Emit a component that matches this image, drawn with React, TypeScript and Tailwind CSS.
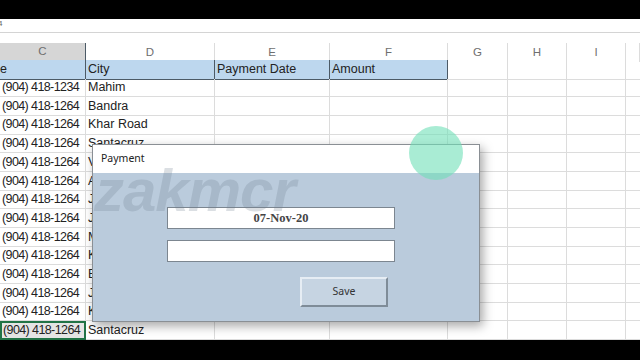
const COLS = ["C", "D", "E", "F", "G", "H", "I", ""]

const ROWS = [
  { phone: "e", city: "City", e: "Payment Date", f: "Amount" },
  { phone: "(904) 418-1234", city: "Mahim" },
  { phone: "(904) 418-1264", city: "Bandra" },
  { phone: "(904) 418-1264", city: "Khar Road" },
  { phone: "(904) 418-1264", city: "Santacruz" },
  { phone: "(904) 418-1264", city: "Vile Parle" },
  { phone: "(904) 418-1264", city: "Andheri" },
  { phone: "(904) 418-1264", city: "Jogeshwari" },
  { phone: "(904) 418-1264", city: "Juhu" },
  { phone: "(904) 418-1264", city: "Malad" },
  { phone: "(904) 418-1264", city: "Kandivali" },
  { phone: "(904) 418-1264", city: "Borivali" },
  { phone: "(904) 418-1264", city: "Jogeshwari" },
  { phone: "(904) 418-1264", city: "Kurla" },
  { phone: "(904) 418-1264", city: "Santacruz" },
]

const grid = "grid grid-cols-[86px_129px_115px_118px_60px_59px_59px_1fr]"

function Row({ row, i }: { row: (typeof ROWS)[number]; i: number }) {
  const head = i === 0
  const last = i === ROWS.length - 1
  const headCell = "bg-[#bdd7ee] border-r border-b border-r-[#4c5a66] border-b-[#4c5a66]"
  const cell = "border-r border-b border-[#dcdcdc]"
  return (
    <div className={`${grid} flex-1 min-h-0`}>
      <div
        className={`flex items-center overflow-hidden whitespace-nowrap tracking-[-0.6px] ${
          head ? headCell : last ? "bg-[#e4e4e4] border-2 border-[#217346] pl-[1px]" : `${cell} pl-[2px]`
        }`}
      >
        {row.phone}
      </div>
      <div className={`flex items-center pl-[2px] whitespace-nowrap overflow-hidden ${head ? headCell : cell}`}>{row.city}</div>
      <div className={`flex items-center pl-[2px] whitespace-nowrap ${head ? headCell : cell}`}>{row.e ?? ""}</div>
      <div className={`flex items-center pl-[2px] whitespace-nowrap ${head ? headCell : cell}`}>{row.f ?? ""}</div>
      <div className={cell} />
      <div className={cell} />
      <div className={cell} />
      <div className="border-b border-[#dcdcdc]" />
    </div>
  )
}

export default function App() {
  return (
    <div className="relative w-[640px] h-[360px] overflow-hidden bg-white flex flex-col font-['Liberation_Sans',Arial,sans-serif] text-[12.5px] text-[#222]">
      <div className="h-[19px] bg-black shrink-0" />
      <div className="h-[14px] shrink-0 border-b border-[#d4d4d4] text-[8px] leading-[10px] text-[#666] -ml-[2px]">4</div>
      <div className="h-[10px] shrink-0" />

      {/* column letters */}
      <div className={`${grid} h-[17px] shrink-0 text-[11.5px] text-[#6f6f6f]`}>
        {COLS.map((c, i) => (
          <div
            key={i}
            className={`flex items-center justify-center ${
              i === 0
                ? "bg-[#d6d6d6] border-b-2 border-b-[#217346] border-r border-r-[#4c5a66]"
                : "border-r border-[#dcdcdc]"
            }`}
          >
            {c}
          </div>
        ))}
      </div>

      <div className="h-[280px] shrink-0 flex flex-col">
        {ROWS.map((r, i) => (
          <Row key={i} row={r} i={i} />
        ))}
      </div>

      <div className="h-[20px] bg-black shrink-0" />

      {/* Payment dialog */}
      <div className="absolute left-[92px] top-[144px] w-[388px] h-[178px] flex flex-col border border-[#8a8f94] shadow-[3px_4px_10px_rgba(0,0,0,0.35)]">
        <div className="h-[28px] shrink-0 bg-white flex items-center pl-[8px] font-['Noto_Sans',sans-serif] text-[10.5px] text-[#222]">
          Payment
        </div>
        <div className="flex-1 bg-[#bacbdc] flex flex-col pl-[74px] pt-[34px]">
          <div className="w-[228px] h-[22px] bg-white border border-[#7c8690] flex items-center justify-center font-['Liberation_Serif',serif] font-bold text-[12.5px] text-[#444]">
            07-Nov-20
          </div>
          <div className="mt-[11px] w-[228px] h-[22px] bg-white border border-[#7c8690]" />
          <button className="mt-[15px] ml-[133px] w-[88px] h-[30px] bg-[#c6d4e2] border-2 border-t-[#e6edf4] border-l-[#e6edf4] border-b-[#7f8c98] border-r-[#7f8c98] font-['Noto_Sans',sans-serif] text-[10.5px] text-[#333]">
            Save
          </button>
        </div>
      </div>

      {/* video watermark */}
      <div className="absolute left-[94px] top-[161px] text-[60px] leading-[60px] font-bold italic tracking-[-1px] text-[#6f808e]/25 pointer-events-none select-none">
        zakmcr
      </div>

      {/* cursor highlight */}
      <div className="absolute left-[409px] top-[126px] w-[54px] h-[54px] rounded-full bg-[#6fe0b8]/60 blur-[0.5px]" />
    </div>
  )
}
